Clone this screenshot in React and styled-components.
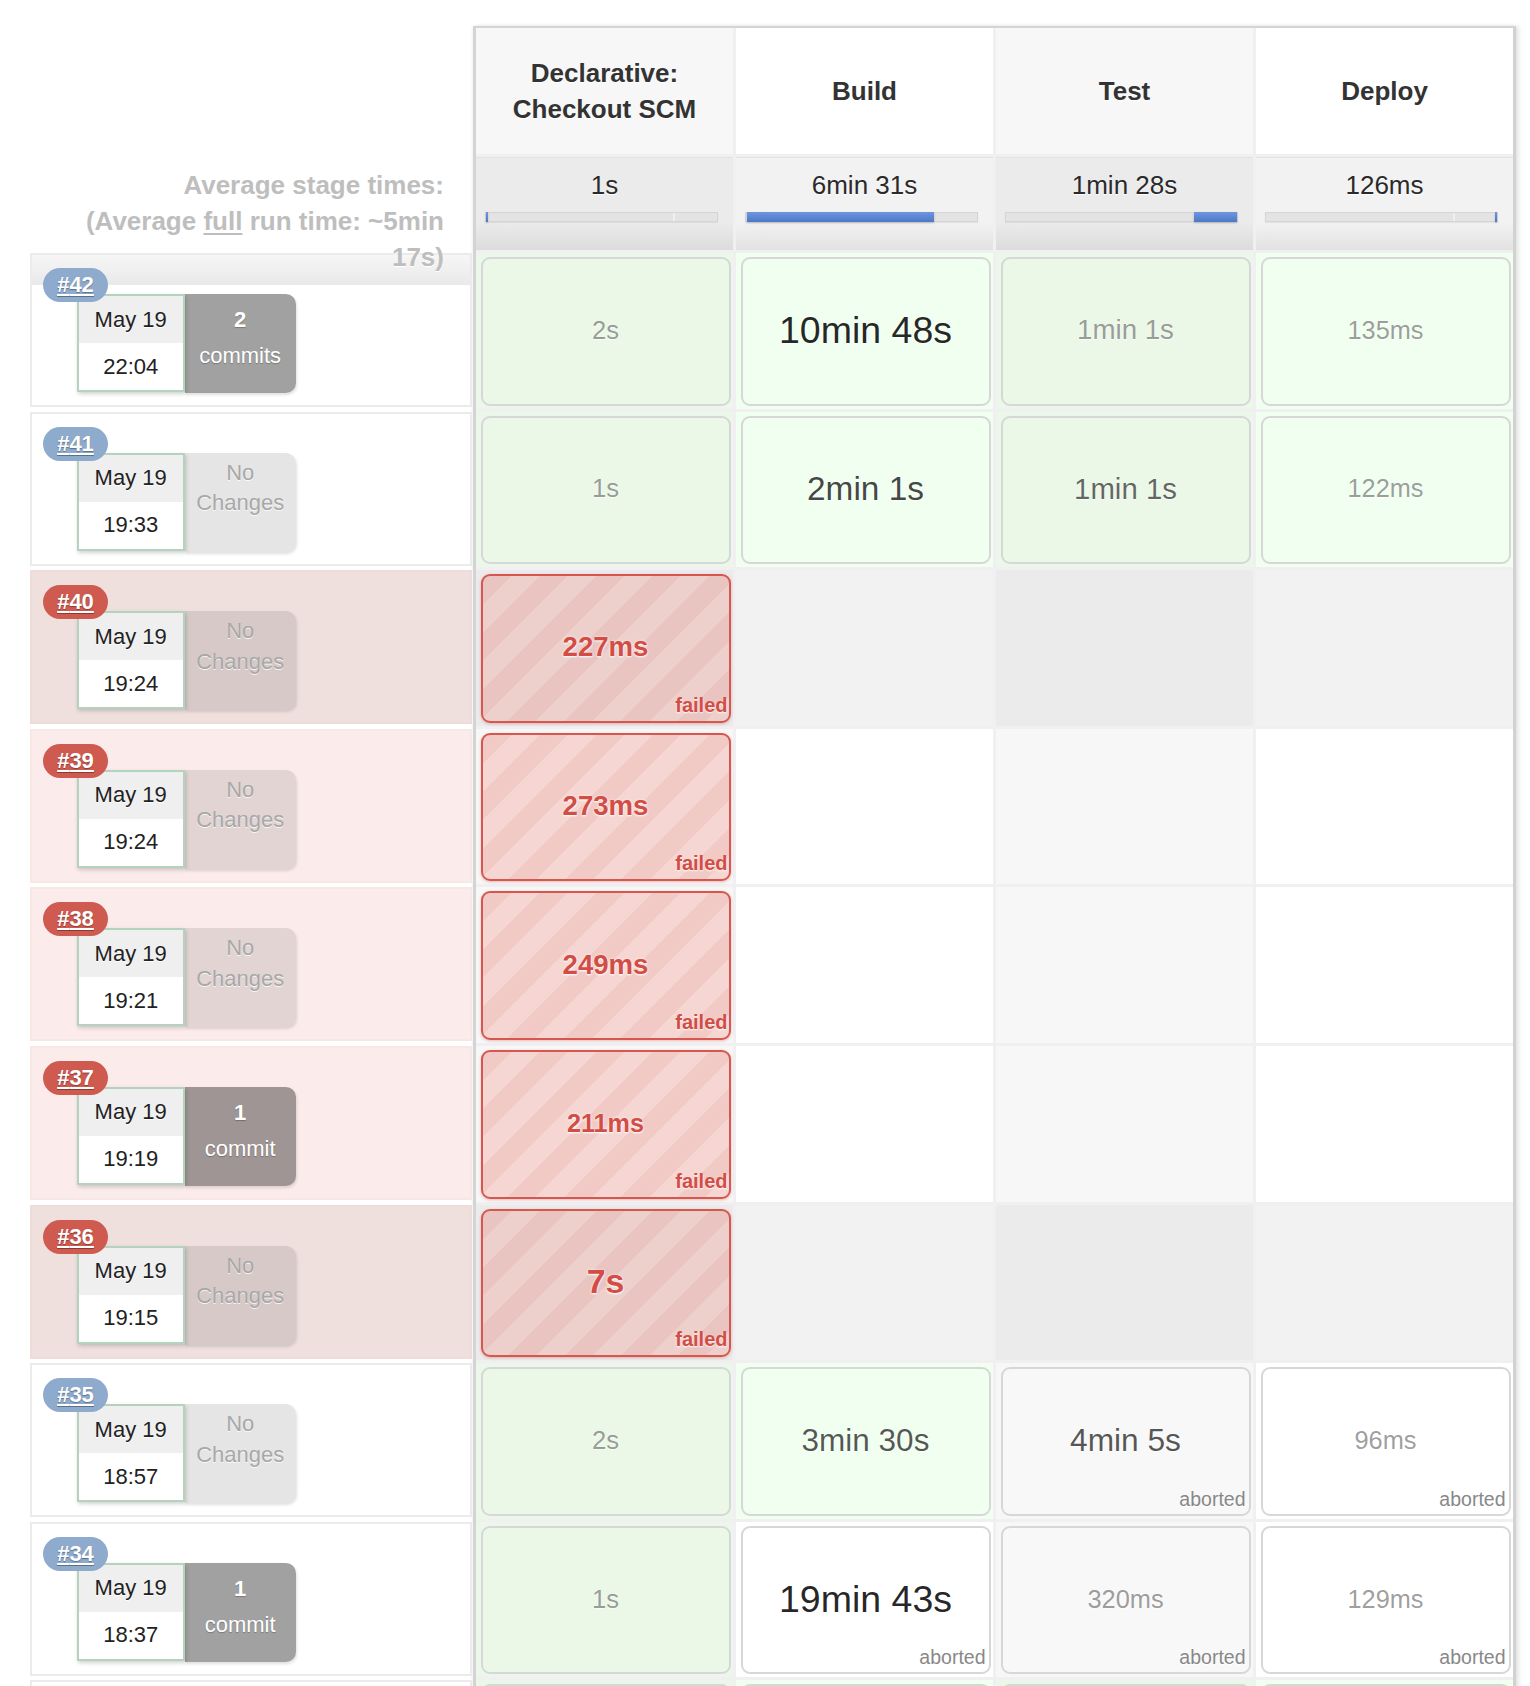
import React from 'react';
import styled, { createGlobalStyle } from 'styled-components';

const GlobalStyle = createGlobalStyle`
  html, body { margin: 0; padding: 0; background: #fff; }
  body { font-family: "Liberation Sans", Arial, Helvetica, sans-serif; color: #333; }
`;

const stages = ['Declarative: Checkout SCM', 'Build', 'Test', 'Deploy'];
const averages = [
  { text: '1s', start: 0, width: 0.9, tick: 81 },
  { text: '6min 31s', start: 0.6, width: 80.6 },
  { text: '1min 28s', start: 81.6, width: 18.2 },
  { text: '126ms', start: 99.2, width: 0.8, tick: 81 },
];

const ok = (text, size, alpha) => ({ kind: 'success', text, size, alpha });
const ab = (text, size, alpha) => ({ kind: 'aborted', text, size, alpha });
const fl = (text, size) => ({ kind: 'failed', text, size });
const none = { kind: 'empty' };
const blank = { kind: 'success', text: '', size: 25, alpha: 0.4 };

const rows = [
  { id: 42, tone: 'ok', first: true, time: '22:04', commits: ['2', 'commits'],
    cells: [ok('2s', 25.6, 0.4), ok('10min 48s', 37.5, 0.86), ok('1min 1s', 27.7, 0.4), ok('135ms', 25.3, 0.4)] },
  { id: 41, tone: 'ok', time: '19:33',
    cells: [ok('1s', 25.6, 0.4), ok('2min 1s', 33.4, 0.74), ok('1min 1s', 29.4, 0.6), ok('122ms', 25.3, 0.4)] },
  { id: 40, tone: 'bad', dim: true, time: '19:24', cells: [fl('227ms', 27.6), none, none, none] },
  { id: 39, tone: 'bad', time: '19:24', cells: [fl('273ms', 27.6), none, none, none] },
  { id: 38, tone: 'bad', time: '19:21', cells: [fl('249ms', 27.6), none, none, none] },
  { id: 37, tone: 'bad', time: '19:19', commits: ['1', 'commit'], cells: [fl('211ms', 25.2), none, none, none] },
  { id: 36, tone: 'bad', dim: true, time: '19:15', cells: [fl('7s', 33.8), none, none, none] },
  { id: 35, tone: 'ok', time: '18:57',
    cells: [ok('2s', 25.6, 0.4), ok('3min 30s', 31.5, 0.66), ab('4min 5s', 31.7, 0.67), ab('96ms', 25.4, 0.4)] },
  { id: 34, tone: 'ok', time: '18:37', commits: ['1', 'commit'],
    cells: [ok('1s', 25.6, 0.4), ab('19min 43s', 37.5, 0.86), ab('320ms', 25.4, 0.4), ab('129ms', 25.3, 0.4)] },
  { id: 33, tone: 'ok', placeholder: true, cells: [blank, blank, blank, blank] },
];

/* ---------- layout ---------- */
const Page = styled.div`
  display: flex;
  align-items: flex-start;
  padding: 26px 0 0 30px;
`;

const LeftCol = styled.div`
  flex: none;
  width: 443px;
  display: flex;
  flex-direction: column;
`;

const HeadSpacer = styled.div`
  height: 131px;
`;

const AvgLabel = styled.div`
  position: relative;
  z-index: 2;
  height: 96px;
  box-sizing: border-box;
  padding: 10px 29px 0 40px;
  text-align: right;
  font-size: 26px;
  font-weight: bold;
  line-height: 36px;
  color: #bebebe;
  text-shadow: 0 1px 0 #fff;
  u { text-decoration: underline; text-underline-offset: 3px; text-decoration-thickness: 2px; }
`;

const RunRow = styled.div`
  position: relative;
  box-sizing: border-box;
  height: 154px;
  width: 441.5px;
  margin-bottom: 4.6px;
  padding: 39px 0 0 44.7px;
  display: flex;
  align-items: flex-start;
  border: 2px solid ${(p) => (p.$tone === 'ok' ? '#ebebeb' : p.$dim ? '#eddcda' : '#f7e7e5')};
  background: ${(p) =>
    p.$first
      ? 'linear-gradient(to bottom, #f6f6f6 0, #e9e9e9 30px, #fff 30px)'
      : p.$tone === 'ok'
      ? '#fff'
      : p.$dim
      ? '#efe0de'
      : '#fbeceb'};
`;

const Badge = styled.a`
  position: absolute;
  top: 13px;
  left: 11px;
  z-index: 1;
  height: 34px;
  width: 65px;
  border-radius: 17px;
  display: flex;
  align-items: center;
  justify-content: center;
  background: ${(p) => (p.$tone === 'ok' ? '#8eaacd' : '#cf5a50')};
  color: #fff;
  font-size: 22px;
  font-weight: bold;
  text-decoration: underline;
  text-decoration-thickness: 1.5px;
  text-underline-offset: 2px;
  text-shadow: 0 1px 1px rgba(0, 0, 0, 0.35);
`;

const DateBox = styled.div`
  flex: none;
  width: 108px;
  height: 98px;
  box-sizing: border-box;
  border: 2px solid #b5d2bf;
  background: #fff;
  display: flex;
  flex-direction: column;
  box-shadow: 1px 2px 4px rgba(0, 0, 0, 0.18);
  position: relative;
`;

const DatePart = styled.div`
  flex: 1;
  display: flex;
  align-items: center;
  justify-content: center;
  font-size: 22px;
  color: #222;
  background: ${(p) => (p.$top ? '#efefef' : '#fff')};
  text-shadow: 0 1px 0 #fff;
`;

const Changes = styled.div`
  flex: none;
  width: 111px;
  height: 99px;
  box-sizing: border-box;
  border-radius: 0 10px 10px 0;
  text-align: center;
  font-size: 22px;
  background: ${(p) => (p.$has ? 'rgba(0,0,0,0.37)' : 'rgba(0,0,0,0.1)')};
  color: ${(p) => (p.$has ? '#fff' : '#a8a8a8')};
  padding-top: ${(p) => (p.$has ? '8px' : '5px')};
  line-height: ${(p) => (p.$has ? '36px' : '30.5px')};
  text-shadow: ${(p) => (p.$has ? '0 1px 1px rgba(0,0,0,0.25)' : '0 1px 0 rgba(255,255,255,0.8)')};
  box-shadow: 1px 2px 3px rgba(0, 0, 0, 0.12);
  b { display: block; }
`;

/* ---------- stage table ---------- */
const Table = styled.div`
  flex: none;
  width: 1043px;
  box-sizing: border-box;
  border-top: 2px solid #d4d4d4;
  border-left: 3px solid #d4d4d4;
  border-right: 3px solid #d2d2d2;
  box-shadow: 3px 0 4px rgba(0, 0, 0, 0.1), -1px 0 3px rgba(0, 0, 0, 0.06);
  background: #f1eff1;
  display: grid;
  grid-template-columns: repeat(4, 1fr);
  grid-template-rows: 126px 93px;
  grid-auto-rows: 155.6px;
  gap: 3px;
`;

const HeadCell = styled.div`
  display: flex;
  align-items: center;
  justify-content: center;
  padding: 0 20px;
  text-align: center;
  font-size: 26px;
  font-weight: bold;
  line-height: 36px;
  color: #333;
  background: ${(p) => (p.$odd ? '#f7f7f7' : '#fff')};
  text-shadow: 0 1px 0 #fff;
`;

const AvgCell = styled.div`
  box-sizing: border-box;
  padding: 12px 0 0 9px;
  border-top: 1px solid #e2e2e2;
  background: ${(p) =>
    p.$odd
      ? 'linear-gradient(to bottom, #ebebeb 0, #ebebeb 70%, #dcdcdc 100%)'
      : 'linear-gradient(to bottom, #f2f2f2 0, #f2f2f2 70%, #e2e2e2 100%)'};
`;

const AvgTime = styled.div`
  height: 30px;
  line-height: 30px;
  padding-right: 9px;
  text-align: center;
  font-size: 26px;
  color: #2a2a2a;
  text-shadow: 0 1px 1px #fff;
`;

const Track = styled.div`
  position: relative;
  margin-top: 12px;
  width: 233px;
  height: 10px;
  box-sizing: border-box;
  background: #e3e3e3;
  border: 1px solid #d5d5d5;
  box-shadow: 0 1px 1px rgba(0, 0, 0, 0.06);
`;

const Tick = styled.span`
  position: absolute;
  top: 0;
  bottom: 0;
  width: 2px;
  background: #f0f0f0;
`;

const Fill = styled.span`
  position: absolute;
  top: -1px;
  bottom: -1px;
  min-width: 2px;
  background: linear-gradient(to bottom, #6f95dc, #4d78c9);
  box-shadow: 0 1px 2px rgba(0, 0, 0, 0.2);
`;

const cellBg = (p) => {
  if (p.$kind === 'success') return p.$odd ? '#ebf8e9' : '#f1fff0';
  if (p.$dim) return p.$odd ? '#ebebeb' : '#f2f2f2';
  return p.$odd ? '#f7f7f7' : '#fff';
};

const StageCell = styled.div`
  box-sizing: border-box;
  padding: 4px 2.5px 3px 4.5px;
  background: ${cellBg};
`;

const cardBg = (p) => {
  if (p.$kind === 'success') return p.$odd ? '#ebf8e8' : '#f0fff0';
  if (p.$kind === 'aborted') return p.$odd ? '#f8f8f8' : '#fff';
  const [a, b] = p.$dim ? ['#e9c4c0', '#edd0cc'] : ['#f1c9c5', '#f5d6d2'];
  return `repeating-linear-gradient(135deg, ${a} 0, ${a} 20px, ${b} 20px, ${b} 40px)`;
};

const Card = styled.div`
  position: relative;
  height: 100%;
  box-sizing: border-box;
  border-radius: 9px;
  border: 2px solid ${(p) => (p.$kind === 'failed' ? '#d6574f' : '#d7d7d7')};
  background: ${cardBg};
  box-shadow: ${(p) => (p.$kind === 'failed' ? '0 1px 3px rgba(200,70,60,0.35)' : 'none')};
  display: flex;
  align-items: center;
  justify-content: center;
`;

const Duration = styled.span`
  font-size: ${(p) => p.$size}px;
  font-weight: ${(p) => (p.$kind === 'failed' ? 'bold' : 'normal')};
  color: ${(p) => (p.$kind === 'failed' ? '#d24d45' : `rgba(0,0,0,${p.$alpha})`)};
  text-shadow: ${(p) =>
    p.$kind === 'failed' ? '0 1px 2px #fff, 0 0 3px rgba(255,255,255,0.7)' : '0 1px 0 rgba(255,255,255,0.7)'};
  margin-top: -2px;
`;

const StatusTag = styled.span`
  position: absolute;
  right: ${(p) => (p.$kind === 'failed' ? '1px' : '3px')};
  bottom: ${(p) => (p.$kind === 'failed' ? '4px' : '3px')};
  font-size: ${(p) => (p.$kind === 'failed' ? '20px' : '19.5px')};
  font-weight: ${(p) => (p.$kind === 'failed' ? 'bold' : 'normal')};
  color: ${(p) => (p.$kind === 'failed' ? '#d24d45' : '#888')};
  text-shadow: ${(p) => (p.$kind === 'failed' ? '0 1px 2px #fff' : '0 1px 0 #fff')};
`;

function RunSummary({ row }) {
  if (row.placeholder) return <RunRow $tone={row.tone} />;
  return (
    <RunRow $tone={row.tone} $dim={row.dim} $first={row.first}>
      <Badge $tone={row.tone}>#{row.id}</Badge>
      <DateBox>
        <DatePart $top>May 19</DatePart>
        <DatePart>{row.time}</DatePart>
      </DateBox>
      {row.commits ? (
        <Changes $has>
          <b>{row.commits[0]}</b>
          {row.commits[1]}
        </Changes>
      ) : (
        <Changes>
          No
          <br />
          Changes
        </Changes>
      )}
    </RunRow>
  );
}

function Stage({ cell, odd, dim }) {
  return (
    <StageCell $kind={cell.kind} $odd={odd} $dim={dim}>
      {cell.kind !== 'empty' && (
        <Card $kind={cell.kind} $odd={odd} $dim={dim}>
          {cell.text && (
            <Duration $kind={cell.kind} $size={cell.size} $alpha={cell.alpha}>
              {cell.text}
            </Duration>
          )}
          {cell.kind !== 'success' && <StatusTag $kind={cell.kind}>{cell.kind}</StatusTag>}
        </Card>
      )}
    </StageCell>
  );
}

export default function App() {
  return (
    <>
      <GlobalStyle />
      <Page>
        <LeftCol>
          <HeadSpacer />
          <AvgLabel>
            Average stage times:
            <br />
            (Average <u>full</u> run time: ~5min 17s)
          </AvgLabel>
          {rows.map((r) => (
            <RunSummary key={r.id} row={r} />
          ))}
        </LeftCol>
        <Table>
          {stages.map((s, i) => (
            <HeadCell key={s} $odd={i % 2 === 0}>
              {s}
            </HeadCell>
          ))}
          {averages.map((a, i) => (
            <AvgCell key={i} $odd={i % 2 === 0}>
              <AvgTime>{a.text}</AvgTime>
              <Track>
                {a.tick && <Tick style={{ left: `${a.tick}%` }} />}
                <Fill style={{ left: `${a.start}%`, width: `${a.width}%` }} />
              </Track>
            </AvgCell>
          ))}
          {rows.map((r) =>
            r.cells.map((c, i) => <Stage key={`${r.id}-${i}`} cell={c} odd={i % 2 === 0} dim={r.dim} />)
          )}
        </Table>
      </Page>
    </>
  );
}
